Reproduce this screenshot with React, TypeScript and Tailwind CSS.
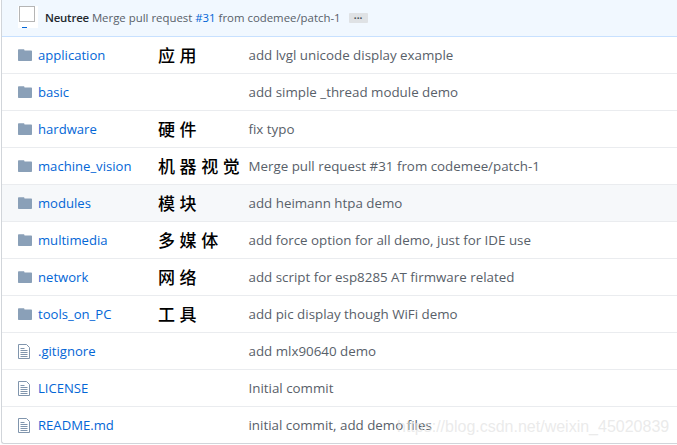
const FONT = "font-['Open_Sans','Noto_Sans',sans-serif]";

interface Row {
  name: string;
  label?: string;
  message: string;
  type: "dir" | "file";
  hover?: boolean;
}

const ROWS: Row[] = [
  { name: "application", label: "应 用", message: "add lvgl unicode display example", type: "dir" },
  { name: "basic", message: "add simple _thread module demo", type: "dir" },
  { name: "hardware", label: "硬 件", message: "fix typo", type: "dir" },
  { name: "machine_vision", label: "机 器 视 觉", message: "Merge pull request #31 from codemee/patch-1", type: "dir" },
  { name: "modules", label: "模 块", message: "add heimann htpa demo", type: "dir", hover: true },
  { name: "multimedia", label: "多 媒 体", message: "add force option for all demo, just for IDE use", type: "dir" },
  { name: "network", label: "网 络", message: "add script for esp8285 AT firmware related", type: "dir" },
  { name: "tools_on_PC", label: "工 具", message: "add pic display though WiFi demo", type: "dir" },
  { name: ".gitignore", message: "add mlx90640 demo", type: "file" },
  { name: "LICENSE", message: "Initial commit", type: "file" },
  { name: "README.md", message: "initial commit, add demo files", type: "file" },
];

function FolderIcon() {
  return (
    <svg width="14" height="12" viewBox="0 0 14 12" className="fill-[#8aa0b8]">
      <path d="M0 1.2C0 .6.4.2 1 .2h4.5c.6 0 1 .5 1 1.3h6.5c.6 0 1 .4 1 1V11c0 .6-.4 1-1 1H1c-.6 0-1-.4-1-1V1.2z" />
    </svg>
  );
}

function FileIcon() {
  return (
    <svg width="12" height="15" viewBox="0 0 12 15" fill="none" className="stroke-[#8095ad]">
      <path d="M.5.5h8l3 3v11H.5z" />
      <path d="M2.5 6.5h7M2.5 8.5h7M2.5 10.5h7M2.5 12.5h7M2.5 4.5h4" />
    </svg>
  );
}

export default function App() {
  return (
    <div className={`w-[677px] h-[445px] overflow-hidden bg-white relative ${FONT}`}>
      <div className="ml-[1px] w-[700px] h-[444px] border-l border-b border-[#d1d5da] rounded-bl-[3px]">
        <div className="h-[37px] bg-[#f1f8ff] border-b border-[#c8e1ff] flex items-center pl-[16px] text-[11.4px] relative">
          <div className="w-[20px] h-[22px] bg-white shrink-0 -mt-[2px] relative">
            <div className="w-[16px] h-[16px] border border-[#b5b5b5] ml-[1px] bg-white"></div>
            <div className="absolute left-[4px] bottom-0 w-[5px] h-[1px] bg-[#0366d6]"></div>
          </div>
          <span className="ml-[7px] font-semibold text-[#24292e] tracking-[-0.2px]">Neutree</span>
          <span className="ml-[3px] text-[#586069]">
            Merge pull request <span className="text-[#0366d6]">#31</span> from codemee/patch-1
          </span>
          <span className="ml-[8px] w-[19px] h-[10px] rounded-[1px] bg-[#dfe2e5] text-[#444d56] text-[10px] font-bold leading-[5px] text-center">...</span>
        </div>
        {ROWS.map((row) => (
          <div
            key={row.name}
            className={`h-[37px] flex items-center border-b border-[#eaecef] last:border-b-transparent ${row.hover ? "bg-[#f6f8fa]" : ""}`}
          >
            <div className="w-[36px] pl-[16px] shrink-0 flex items-center">
              {row.type === "dir" ? <FolderIcon /> : <FileIcon />}
            </div>
            <div className="w-[120px] shrink-0 text-[13.1px] text-[#0366d6] pt-[2px]">{row.name}</div>
            <div className="w-[90.5px] shrink-0 font-['Noto_Sans_CJK_SC',sans-serif] text-[17px] tracking-[0.4px] font-medium text-black whitespace-pre">
              {row.label}
            </div>
            <div className="text-[13.35px] text-[#586069]">{row.message}</div>
          </div>
        ))}
      </div>
      <div className="absolute left-[397px] top-[415px] text-[16px] text-[#e2e2e2]/70 whitespace-nowrap font-['Liberation_Sans',sans-serif]">
        https://blog.csdn.net/weixin_45020839
      </div>
    </div>
  );
}
